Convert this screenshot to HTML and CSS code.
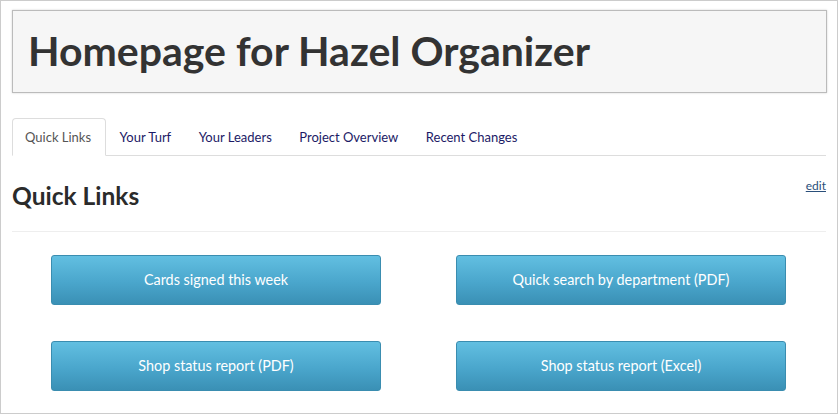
FILE: index.html
```html
<!DOCTYPE html>
<html>
<head>
<meta charset="utf-8">
<link rel="stylesheet" href="styles.css">
</head>
<body>
<div class="frame">
  <div class="page-header">
    <h1 class="title">Homepage for Hazel Organizer</h1>
  </div>
  <ul class="tabs">
    <li class="tab active"><a href="#">Quick Links</a></li>
    <li class="tab"><a href="#">Your Turf</a></li>
    <li class="tab"><a href="#">Your Leaders</a></li>
    <li class="tab"><a href="#">Project Overview</a></li>
    <li class="tab"><a href="#">Recent Changes</a></li>
  </ul>
  <div class="section-head">
    <h2 class="section-title">Quick Links</h2>
    <a class="edit" href="#">edit</a>
  </div>
  <div class="links">
    <a class="btn" href="#">Cards signed this week</a>
    <a class="btn" href="#">Quick search by department (PDF)</a>
    <a class="btn" href="#">Shop status report (PDF)</a>
    <a class="btn" href="#">Shop status report (Excel)</a>
  </div>
</div>
</body>
</html>
```
FILE: styles.css
```css
html, body {
  margin: 0;
  padding: 0;
  background: #fff;
}
body {
  font-family: Lato, "Noto Sans", sans-serif;
  color: #333;
}
.frame {
  box-sizing: border-box;
  width: 838px;
  height: 414px;
  border: 1px solid #ccc;
  padding: 9px 11px 0 11px;
  overflow: hidden;
}
.page-header {
  box-sizing: border-box;
  height: 83px;
  width: 815px;
  background: #f6f6f6;
  border: 1px solid #bbb;
  box-shadow: 0 0 2px rgba(0,0,0,0.18);
  display: flex;
  align-items: center;
  padding-left: 15px;
}
.title {
  margin: 0;
  font-size: 41px;
  font-weight: 700;
  color: #333;
  line-height: 1;
  padding-bottom: 3px;
}
.tabs {
  list-style: none;
  margin: 25px 0 0 0;
  padding: 0;
  display: flex;
  border-bottom: 1px solid #ddd;
  height: 37px;
}
.tab {
  margin-bottom: -1px;
}
.tab a {
  display: block;
  box-sizing: border-box;
  height: 38px;
  padding: 10px 12.5px 0 13px;
  font-size: 13px;
  color: #1c1a66;
  text-decoration: none;
  border: 1px solid transparent;
  border-radius: 4px 4px 0 0;
}
.tab.active a {
  color: #555;
  background: #fff;
  border-color: #ddd;
  border-bottom-color: #fff;
  padding-left: 12px;
  padding-right: 13.5px;
}
.section-head {
  display: flex;
  justify-content: space-between;
  align-items: flex-start;
  border-bottom: 1px solid #eee;
  height: 76px;
  box-sizing: border-box;
}
.section-title {
  margin: 25px 0 0 0;
  font-size: 24.5px;
  font-weight: 700;
  color: #2b2b2b;
  line-height: 30px;
}
.edit {
  margin-top: 22px;
  margin-right: 0;
  font-size: 12px;
  color: #2a4f7a;
  text-decoration: underline;
}
.links {
  display: grid;
  grid-template-columns: 330px 330px;
  column-gap: 75px;
  row-gap: 36px;
  padding: 23px 0 0 39px;
}
.btn {
  box-sizing: border-box;
  height: 50px;
  display: flex;
  align-items: center;
  justify-content: center;
  color: #fff;
  font-size: 14.4px;
  text-decoration: none;
  background: linear-gradient(to bottom, #62bfe1 0%, #4aa6cc 55%, #3a90b5 100%);
  border: 1px solid #3a8db0;
  border-radius: 3px;
  padding-bottom: 2px;
}
```
